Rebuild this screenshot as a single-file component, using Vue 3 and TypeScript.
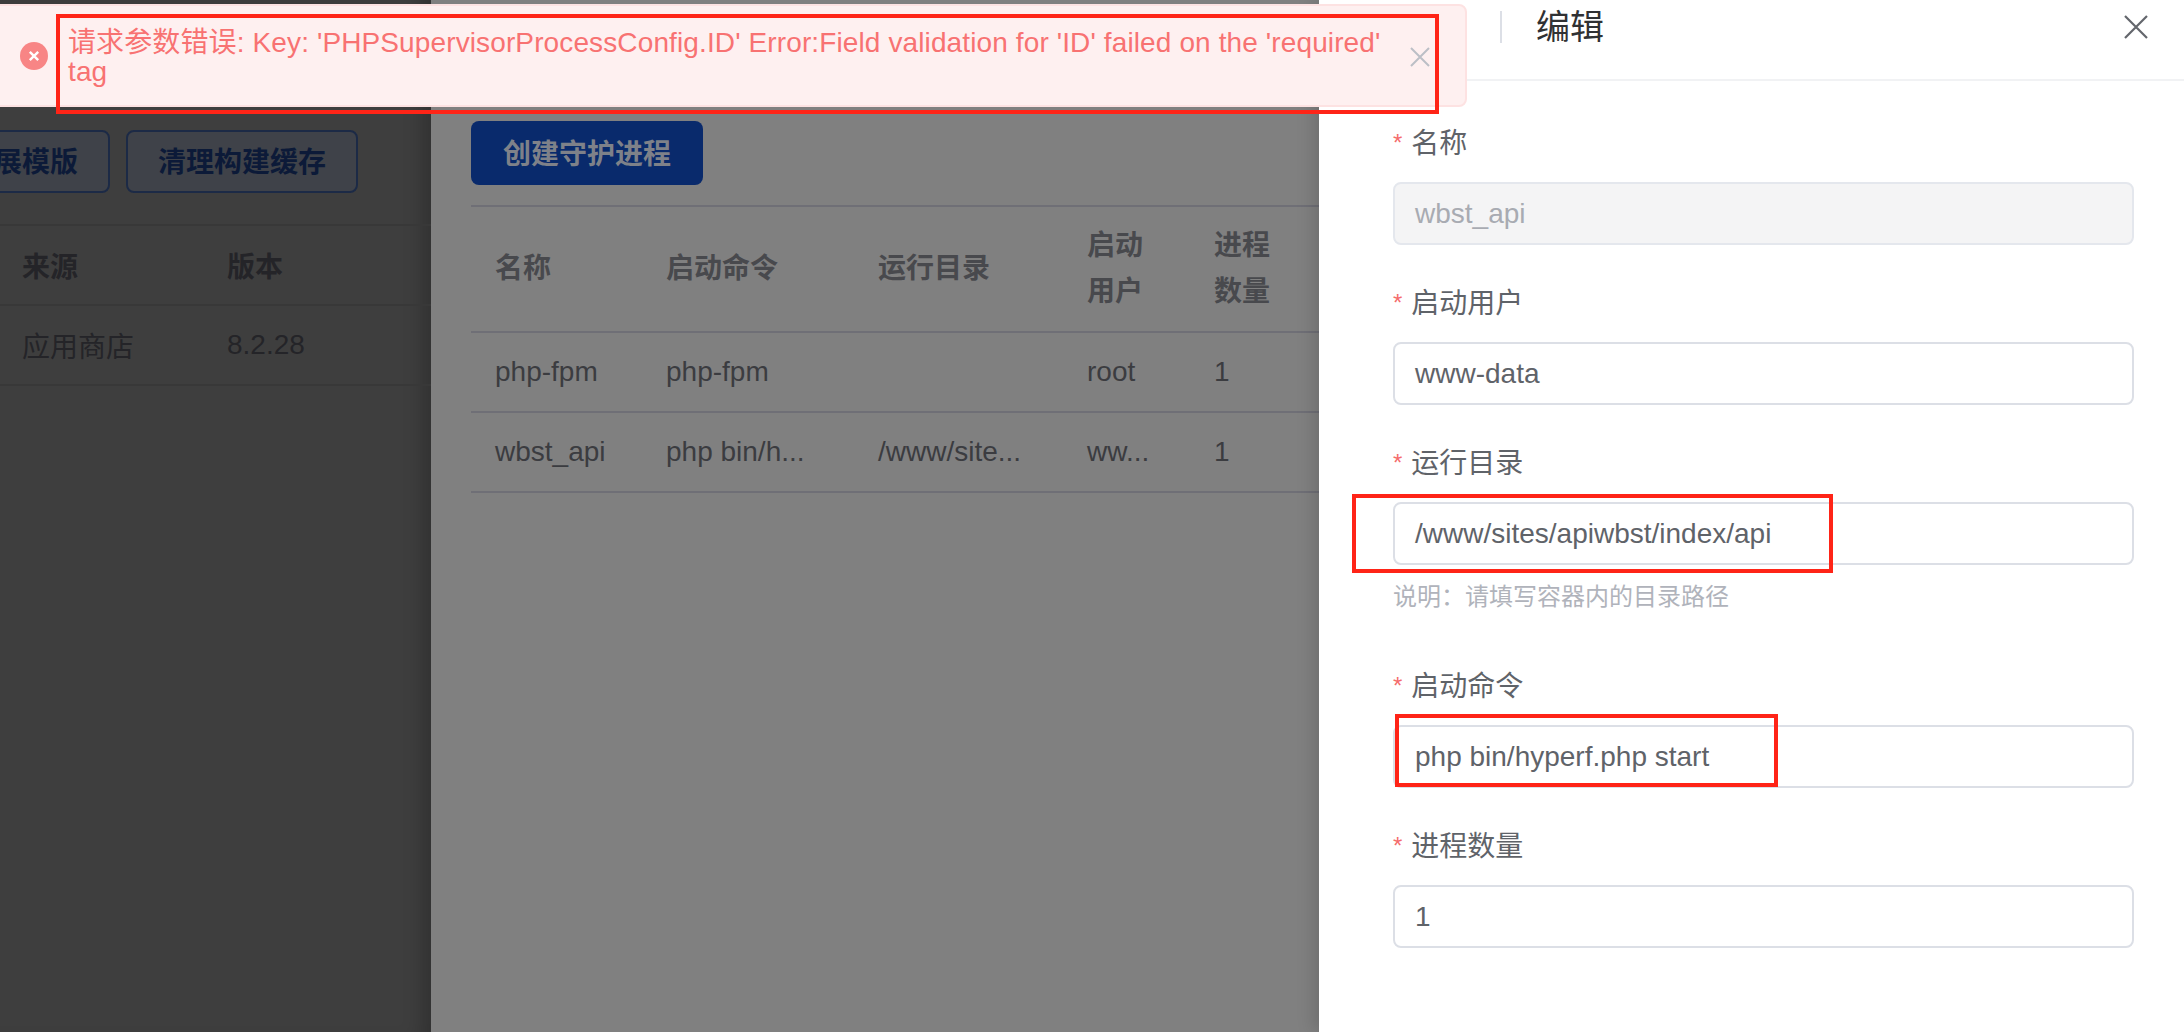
<script setup lang="ts">
interface Field { label: string; value: string; disabled?: boolean; hint?: string }
const fields: Field[] = [
  { label: '名称', value: 'wbst_api', disabled: true },
  { label: '启动用户', value: 'www-data' },
  { label: '运行目录', value: '/www/sites/apiwbst/index/api', hint: '说明\uFF1A请填写容器内的目录路径' },
  { label: '启动命令', value: 'php bin/hyperf.php start' },
  { label: '进程数量', value: '1' },
]
const rows = [
  ['php-fpm', 'php-fpm', '', 'root', '1'],
  ['wbst_api', 'php bin/h...', '/www/site...', 'ww...', '1'],
]
</script>

<template>
  <div class="screen">
    <section class="pane-left">
      <div class="left-actions">
        <button class="ghost-btn">扩展模版</button>
        <button class="ghost-btn">清理构建缓存</button>
      </div>
      <div class="left-table">
        <div class="left-row left-head"><span>来源</span><span>版本</span></div>
        <div class="left-row"><span>应用商店</span><span>8.2.28</span></div>
      </div>
    </section>

    <section class="pane-mid">
      <button class="primary-btn">创建守护进程</button>
      <div class="proc-table">
        <div class="proc-row proc-head">
          <span>名称</span><span>启动命令</span><span>运行目录</span><span>启动<br />用户</span><span>进程<br />数量</span>
        </div>
        <div v-for="row in rows" :key="row[0]" class="proc-row">
          <span v-for="(cell, i) in row" :key="i">{{ cell }}</span>
        </div>
      </div>
    </section>

    <aside class="drawer">
      <header class="drawer-head">
        <span class="drawer-rule"></span>
        <h2 class="drawer-title">编辑</h2>
        <svg class="drawer-close" viewBox="0 0 24 24" width="24" height="24" fill="none" stroke="#63666c" stroke-width="2.2">
          <path d="M1 1 L23 23 M23 1 L1 23" />
        </svg>
      </header>
      <form class="form">
        <div v-for="f in fields" :key="f.label" class="field" :class="{ 'has-hint': f.hint }">
          <label class="field-label"><i class="star">*</i>{{ f.label }}</label>
          <div class="input" :class="{ disabled: f.disabled }">{{ f.value }}</div>
          <p v-if="f.hint" class="hint">{{ f.hint }}</p>
        </div>
      </form>
    </aside>

    <div class="message">
      <span class="message-icon">
        <svg viewBox="0 0 28 28" width="28" height="28">
          <circle cx="14" cy="14" r="14" fill="#f88585" />
          <path d="M9.8 9.8 L18.2 18.2 M18.2 9.8 L9.8 18.2" stroke="#fff" stroke-width="2.4" fill="none" />
        </svg>
      </span>
      <p class="message-text">请求参数错误: Key: 'PHPSupervisorProcessConfig.ID' Error:Field validation for 'ID' failed on the 'required' tag</p>
      <svg class="message-close" viewBox="0 0 20 20" width="20" height="20" fill="none" stroke="#bcbfc6" stroke-width="2">
        <path d="M1 1 L19 19 M19 1 L1 19" />
      </svg>
    </div>

    <div class="mark mark-message"></div>
    <div class="mark mark-dir"></div>
    <div class="mark mark-cmd"></div>
  </div>
</template>

<style>
html, body { margin: 0; background: #fff; }
</style>

<style scoped>
.screen {
  position: relative;
  display: flex;
  width: 2184px;
  height: 1032px;
  overflow: hidden;
  font-family: "Liberation Sans", "Noto Sans CJK SC", sans-serif;
  font-size: 28px;
}
.pane-left {
  width: 431px;
  flex: none;
  overflow: hidden;
  background: #3e3e3e;
  box-shadow: inset -22px 0 20px -14px rgba(0, 0, 0, 0.22);
  color: #242428;
  padding-top: 130px;
  box-sizing: border-box;
}
.left-actions { display: flex; gap: 16px; margin-left: -66px; }
.ghost-btn {
  height: 63px;
  padding: 0 30px 3px;
  flex: none;
  border: 2px solid #1c2a46;
  border-radius: 8px;
  background: #3f4249;
  color: #0c1a38;
  font: 700 28px "Liberation Sans", "Noto Sans CJK SC", sans-serif;
}
.left-table { margin-top: 31px; }
.left-row {
  display: grid;
  grid-template-columns: 205px 1fr;
  height: 80px;
  box-sizing: border-box;
  align-items: center;
  padding: 0 0 1px 22px;
  border-bottom: 2px solid #383838;
}
.left-head { height: 82px; border-top: 2px solid #383838; font-weight: 700; }
.pane-mid {
  width: 888px;
  flex: none;
  background: #808080;
  padding: 121px 0 0 40px;
  box-sizing: border-box;
  color: #3b3c40;
}
.primary-btn {
  display: block;
  width: 232px;
  height: 64px;
  padding-bottom: 3px;
  border: none;
  border-radius: 8px;
  background: #092a6c;
  color: #7e8189;
  font: 700 28px "Liberation Sans", "Noto Sans CJK SC", sans-serif;
}
.proc-table { margin-top: 20px; border-top: 2px solid #6f6f76; }
.proc-row {
  display: grid;
  grid-template-columns: 171px 212px 209px 127px 1fr;
  height: 78px;
  align-items: center;
  padding-left: 24px;
  border-bottom: 2px solid #6f6f76;
}
.proc-head { height: 124px; line-height: 46px; font-weight: 700; color: #48494d; }
.drawer {
  position: relative;
  width: 865px;
  flex: none;
  background: #fff;
  box-shadow: -6px 0 16px rgba(0, 0, 0, 0.14);
  color: #5f6369;
}
.drawer-head {
  display: flex;
  align-items: center;
  height: 81px;
  padding: 0 36px 26px 181px;
  box-sizing: border-box;
  border-bottom: 2px solid #f1f2f4;
}
.drawer-rule { width: 2px; height: 32px; background: #dcdfe6; }
.drawer-title { margin: 0 0 0 34px; flex: 1; font-size: 34px; font-weight: 400; line-height: 34px; color: #303133; }
.form { padding: 42px 50px 0 74px; }
.field { margin-bottom: 38px; }
.field.has-hint { margin-bottom: 53px; }
.field-label { display: block; height: 40px; line-height: 40px; margin-bottom: 19px; color: #5f6369; }
.star { font-style: normal; color: #f56c6c; font-size: 24px; margin-right: 9px; vertical-align: 2px; }
.input {
  height: 63px;
  line-height: 59px;
  box-sizing: border-box;
  padding: 0 20px;
  border: 2px solid #dcdfe6;
  border-radius: 8px;
  color: #5f6369;
}
.input.disabled { background: #f4f4f5; border-color: #e4e7ed; color: #a8abb2; }
.hint { margin: 16px 0 0; font-size: 24px; line-height: 32px; color: #b0b3bb; }
.message {
  position: absolute;
  left: -20px;
  top: 4px;
  width: 1487px;
  height: 103px;
  box-sizing: border-box;
  border: 2px solid #fde2e2;
  border-radius: 8px;
  background: #fef0f0;
  color: #f87272;
}
.message-icon { position: absolute; left: 38px; top: 36px; line-height: 0; }
.message-text {
  position: absolute;
  left: 86px;
  top: 22px;
  width: 1322px;
  margin: 0;
  line-height: 29px;
  letter-spacing: 0.12px;
}
.message-close { position: absolute; left: 1428px; top: 41px; }
.mark { position: absolute; box-sizing: border-box; border: 4px solid #ff2417; pointer-events: none; }
.mark-message { left: 56px; top: 14px; width: 1383px; height: 100px; }
.mark-dir { left: 1352px; top: 494px; width: 481px; height: 79px; }
.mark-cmd { left: 1395px; top: 714px; width: 383px; height: 73px; }
</style>
